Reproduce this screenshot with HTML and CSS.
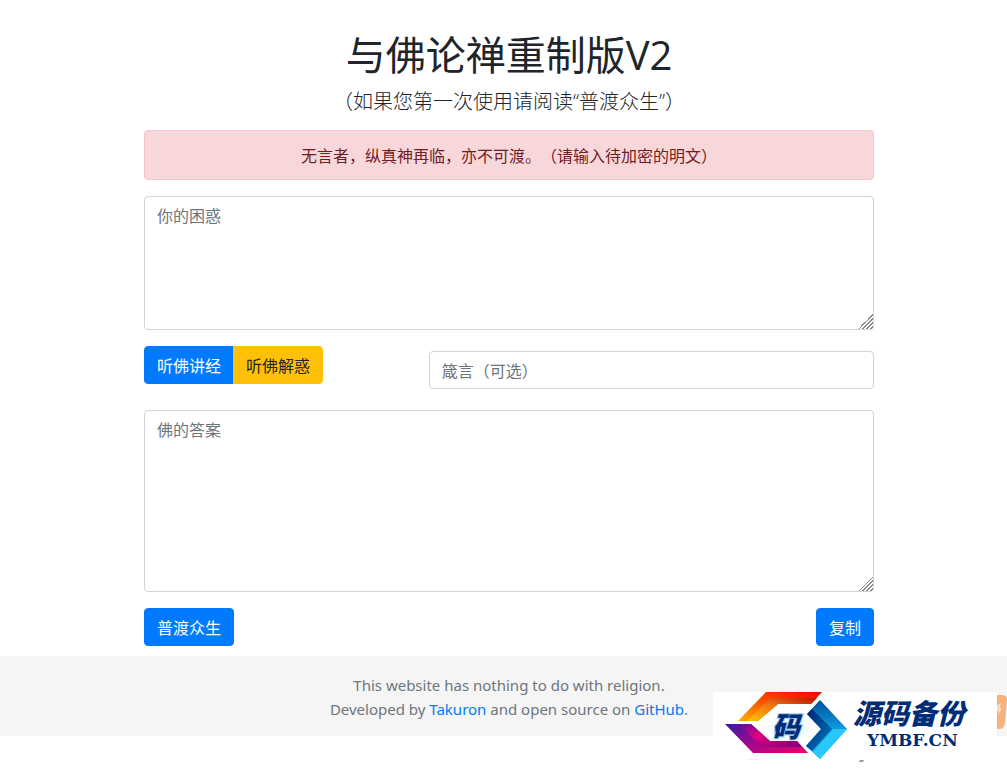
FILE: index.html
```html
<!DOCTYPE html>
<html lang="zh-CN">
<head>
  <meta charset="utf-8">
  <meta name="viewport" content="width=device-width, initial-scale=1">
  <title>与佛论禅重制版V2</title>
  <link rel="stylesheet" href="styles.css">
</head>
<body>
  <main class="page">
    <div class="container">
      <header class="heading">
        <h1>与佛论禅重制版V2</h1>
        <p class="lead">（如果您第一次使用请阅读“普渡众生”）</p>
      </header>

      <div class="alert" role="alert">无言者，纵真神再临，亦不可渡。（请输入待加密的明文）</div>

      <textarea class="form-control" id="question" rows="5" placeholder="你的困惑" aria-label="你的困惑"></textarea>

      <div class="tools">
        <div class="btn-group">
          <button type="button" class="btn btn-primary">听佛讲经</button>
          <button type="button" class="btn btn-warning">听佛解惑</button>
        </div>
        <input type="text" class="form-control key" id="key" placeholder="箴言（可选）" aria-label="箴言（可选）">
      </div>

      <textarea class="form-control" id="answer" rows="7" placeholder="佛的答案" aria-label="佛的答案"></textarea>

      <div class="actions">
        <button type="button" class="btn btn-primary">普渡众生</button>
        <button type="button" class="btn btn-primary">复制</button>
      </div>
    </div>
  </main>

  <footer class="footer">
    <p>This website has nothing to do with religion.</p>
    <p>Developed by <a href="#">Takuron</a> and open source on <a href="#">GitHub</a>.</p>
  </footer>

  <!-- site badge -->
  <div class="watermark">
    <svg class="logo" width="284" height="78" viewBox="0 0 284 78" role="img" aria-label="源码备份 YMBF.CN">
      <defs>
        <linearGradient id="fire" x1="0" y1="1" x2="1" y2="0">
          <stop offset="0" stop-color="#ffb000"/>
          <stop offset=".5" stop-color="#ff4d00"/>
          <stop offset="1" stop-color="#f00000"/>
        </linearGradient>
        <linearGradient id="fireInner" x1="0" y1="1" x2="1" y2="0">
          <stop offset="0" stop-color="#ffc400"/>
          <stop offset=".5" stop-color="#f07414"/>
          <stop offset="1" stop-color="#b81400"/>
        </linearGradient>
        <linearGradient id="berry" x1="0" y1="0" x2="1" y2="1">
          <stop offset="0" stop-color="#3c1ca8"/>
          <stop offset=".5" stop-color="#a0088c"/>
          <stop offset="1" stop-color="#f0006c"/>
        </linearGradient>
        <linearGradient id="berryInner" x1="0" y1="0" x2="1" y2="1">
          <stop offset="0" stop-color="#5a10a0"/>
          <stop offset=".4" stop-color="#e00080"/>
          <stop offset="1" stop-color="#780078"/>
        </linearGradient>
        <linearGradient id="sea" x1="0" y1="0" x2="0" y2="1">
          <stop offset="0" stop-color="#00509c"/>
          <stop offset=".5" stop-color="#109cdc"/>
          <stop offset="1" stop-color="#10b8e0"/>
        </linearGradient>
        <linearGradient id="seaInner" x1="0" y1="0" x2="1" y2="1">
          <stop offset="0" stop-color="#002070"/>
          <stop offset="1" stop-color="#0080c4"/>
        </linearGradient>
      </defs>
      <path fill="url(#fire)" d="M53 0H109L98 12H65L45 29H25Z"/>
      <path fill="url(#fireInner)" d="M57 6H104L98 12H65L45 29H34Z"/>
      <path fill="url(#berry)" d="M12 32H38L57 49H84L95 61H40Z"/>
      <path fill="url(#berryInner)" d="M26 32H38L57 49H84L89 55H49Z"/>
      <path fill="url(#sea)" d="M107 8L134 37L107 67L93 54L108 37L94 22Z"/>
      <path fill="#28c8fa" d="M120 37H134L107 67L100 60Z"/>
      <path fill="url(#seaInner)" d="M94 22L99 17L119 37L99 59L93 54L108 37Z"/>
      <ellipse cx="76" cy="35" rx="21" ry="14" fill="#f2fbff"/>
      <text class="logo-mark" x="59" y="45">码</text>
      <text class="logo-name" x="140" y="32">源码备份</text>
      <text class="logo-domain" x="154" y="54">YMBF.CN</text>
      <path fill="#eeeeee" d="M36 67H46V68H36Z"/>
      <path fill="#999999" d="M147 68H151L150 70H146Z"/>
    </svg>
    <svg class="tag" width="10" height="34" viewBox="0 0 10 34" aria-hidden="true">
      <path fill="#f7b27c" d="M0 0H5Q10 0 10 5L8 28Q7 34 2 34H0Z"/>
      <path fill="#fbd9bd" d="M0 10L4 8L3 13H5L1 21L2 16H0Z"/>
    </svg>
  </div>
</body>
</html>
```
FILE: styles.css
```css
* {
  box-sizing: border-box;
}

body {
  margin: 0;
  font-family: "Noto Sans", "Noto Sans CJK SC", sans-serif;
  font-size: 16px;
  line-height: 24px;
  color: #212529;
  background-color: #fff;
}

h1,
p {
  margin: 0;
}

a {
  color: #007bff;
  text-decoration: none;
}

.page,
.footer {
  padding-left: 11px;
}

.container {
  max-width: 730px;
  margin: 0 auto;
  padding-top: 31px;
}

.heading {
  text-align: center;
  margin-bottom: 13px;
}

.heading h1 {
  margin-bottom: 8px;
  font-family: "Open Sans", "Noto Sans CJK SC", sans-serif;
  font-size: 40px;
  font-weight: 400;
  line-height: 48px;
}

.lead {
  font-family: "Open Sans", "Noto Sans CJK SC", sans-serif;
  font-size: 20px;
  font-weight: 300;
  line-height: 30px;
}

.alert {
  margin-bottom: 16px;
  padding: 13px 20px 11px;
  border: 1px solid #f5c6cb;
  border-radius: 4px;
  background-color: #f8d7da;
  color: #721c24;
  text-align: center;
  text-spacing-trim: space-all;
}

.form-control {
  display: block;
  width: 100%;
  padding: 7px 12px 5px;
  border: 1px solid #ced4da;
  border-radius: 4px;
  background-color: #fff;
  color: #495057;
  font: inherit;
}

.form-control::placeholder {
  color: #6c757d;
}

textarea.form-control {
  resize: vertical;
}

/* diagonal grip lines in the corner */
textarea::-webkit-resizer {
  background: linear-gradient(135deg,
    transparent 50%, #888 50%, #888 56%,
    transparent 56%, transparent 63%, #888 63%, #888 69%,
    transparent 69%, transparent 76%, #888 76%, #888 82%,
    transparent 82%, transparent 89%, #888 89%, #888 95%,
    transparent 95%);
}

.tools {
  display: flex;
  justify-content: space-between;
  align-items: flex-start;
  margin: 16px 0 21px;
}

.btn-group {
  display: flex;
}

.btn {
  padding: 7px 12px 5px;
  border: 1px solid transparent;
  border-radius: 4px;
  font: inherit;
  cursor: pointer;
}

.btn-primary {
  background-color: #007bff;
  border-color: #007bff;
  color: #fff;
}

.btn-warning {
  background-color: #ffc107;
  border-color: #ffc107;
  color: #212529;
}

.btn-group .btn:first-child {
  border-top-right-radius: 0;
  border-bottom-right-radius: 0;
}

.btn-group .btn:last-child {
  margin-left: -1px;
  border-top-left-radius: 0;
  border-bottom-left-radius: 0;
}

.key {
  width: 61%;
  height: 38px;
  margin-top: 5px;
}

.actions {
  display: flex;
  justify-content: space-between;
  margin: 16px 0 10px;
}

.footer {
  padding-top: 17px;
  padding-bottom: 15px;
  background-color: #f5f5f5;
  color: #6c757d;
  font-size: 15px;
  text-align: center;
}

.watermark {
  position: fixed;
  right: 0;
  bottom: 0;
  display: flex;
}

.logo {
  display: block;
  background-color: #fff;
}

.tag {
  display: block;
  margin-top: 3px;
}

.logo-mark,
.logo-name {
  font-family: "Noto Sans CJK SC", sans-serif;
  font-style: italic;
  font-weight: 900;
  fill: #002c78;
}

.logo-mark {
  font-size: 28px;
  paint-order: stroke;
  stroke: #9fc4e8;
  stroke-width: 2px;
}

.logo-name {
  font-size: 28px;
}

.logo-domain {
  font-family: "DejaVu Serif", serif;
  font-size: 17px;
  font-weight: bold;
  fill: #002c78;
}
```
